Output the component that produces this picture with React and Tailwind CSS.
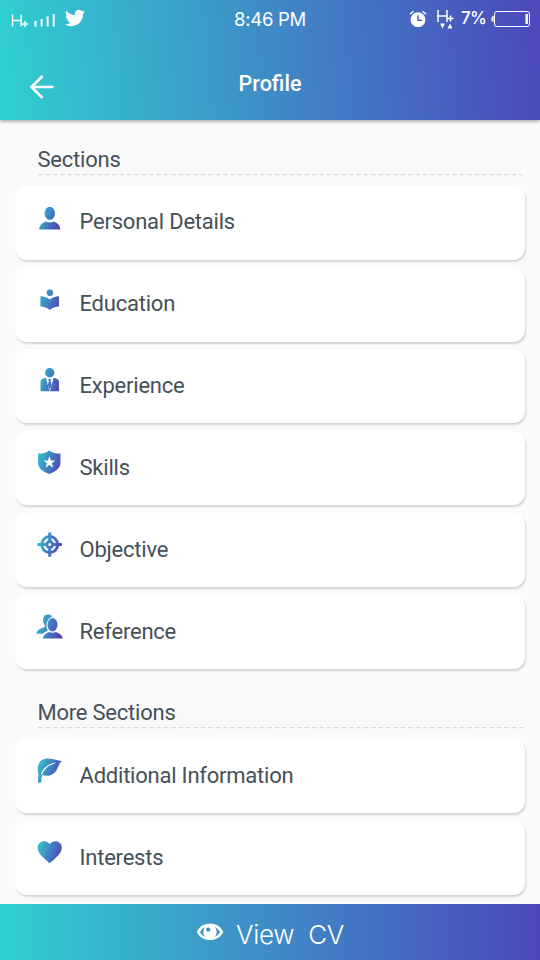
import React from 'react'

function PersonIcon() {
    return (
        <>
            <ellipse cx="13.8" cy="8.3" rx="5.2" ry="6.6" />
            <path d="M3 24.4c.4-4 2.8-6.6 7-8 2.2 1.3 5.400 1.3 7.600 0 4.200 1.400 6.500 4 6.800 8z" />
        </>
    )
}

function EducationIcon() {
    return (
        <>
            <circle cx="13.9" cy="5.8" r="3.2" />
            <path d="M4.400 9.200c3.800.2 7 1.300 9.400 3.400 2.400-2.100 5.600-3.200 9.200-3.400v10.400c-3.400.2-6.700 1.400-9.200 3.400-2.500-2-5.800-3.200-9.400-3.400z" />
        </>
    )
}

function ExperienceIcon() {
    return (
        <>
            <circle cx="13.7" cy="4.8" r="4.7" />
            <path d="M4.500 23.200V14.500c0-2.300 1.300-3.700 4.200-4.400l1.300-.2 3.500 13.300z" />
            <path d="M23 23.200V14.500c0-2.300-1.300-3.700-4.200-4.400l-1.300-.2-3.500 13.300z" />
            <path d="M12.200 11h3.100l-.7 2 1 4-1.900 5-1.900-5 1.100-4z" />
        </>
    )
}

function SkillsIcon() {
    return (
        <path
            fillRule="evenodd"
            d="M13.300.4c3 2.300 6.800 3.300 11.100 3.200v9.200c0 5.200-4.600 9.100-11.100 11.200C6.800 21.900 2 18 2 12.800V3.600C6.400 3.700 10.200 2.700 13.300.4zM13.400 6.200l-1.500 4.300-4.500.1 3.600 2.700-1.300 4.400 3.700-2.600 3.700 2.600-1.300-4.400 3.600-2.700-4.500-.1z"
        />
    )
}

function ObjectiveIcon() {
    return (
        <>
            <g fill="none" stroke="url(#iconFill)">
                <circle cx="13.7" cy="12.6" r="8" strokeWidth="3" />
                <circle cx="13.7" cy="12.6" r="3" strokeWidth="3" />
            </g>
            <path d="M12.200.5h3v8.200h-3zM12.200 16.600h3v8.200h-3zM1.500 11.100h8.300v3H1.500zM17.600 11.100h8.300v3h-8.300z" />
        </>
    )
}

function ReferenceIcon() {
    return (
        <>
            <path d="M16.200 2.200C14.500.2 11.100-.1 9 1.300 6.400 3.100 6.500 8 8.500 10.700c.7 1 .5 2.100-.7 2.800C4 14.700.9 16.400.3 19.700h6.700c1.100-1.300 2.700-2.300 4.800-3-2.300-4.100-2.100-11.100 4.400-14.500z" />
            <ellipse cx="16.500" cy="10.800" rx="5" ry="6.700" />
            <path d="M6.800 24.600c.4-3.500 2.900-5.600 6.500-6.700 1.900 1.100 4.400 1.100 6.300 0 3.900 1.100 6.700 3.200 7.200 6.700z" />
        </>
    )
}

function LeafIcon() {
    return (
        <>
            <path d="M2.700 17.500C.5 10.500 1.800 4.700 6.200 2 10-.3 14 .3 17.500 1.200c3 .8 5.500 1.400 8.200 1.700-2.700 2.900-3.300 5.600-4.800 8.600-2.600 5.300-8.500 7.600-15.200 5.600L4 18z" />
            <path d="M4.800 18.500C6.200 12.500 10 7.500 18.500 5" fill="none" stroke="white" strokeWidth="1.300" />
            <path d="M2 24.700c-.2-5 .4-8.700 2.400-12.500C4.300 14.500 4.600 17 6.300 16.500 5.500 18.500 5.300 21 5.300 23.500c0 .8-.5 1.200-1.200 1.200z" />
        </>
    )
}

function HeartIcon() {
    return (
        <path d="M13.700 23.200C8.500 18.800 1.600 13.700 1.600 7.600 1.600 1.100 10.100-.9 13.700 4.100 17.300-.9 25.800 1.100 25.800 7.600c0 6.100-6.900 11.200-12.100 15.600z" />
    )
}

const sections = [
    { label: 'Personal Details', Icon: PersonIcon },
    { label: 'Education', Icon: EducationIcon },
    { label: 'Experience', Icon: ExperienceIcon },
    { label: 'Skills', Icon: SkillsIcon },
    { label: 'Objective', Icon: ObjectiveIcon },
    { label: 'Reference', Icon: ReferenceIcon },
]

const moreSections = [
    { label: 'Additional Information', Icon: LeafIcon },
    { label: 'Interests', Icon: HeartIcon },
]

function StatusBar() {
    return (
        <div className="grid h-[38px] grid-cols-3 items-center">
            <div className="flex items-center pl-[11px]">
                <svg width="46" height="18" viewBox="0 0 46 18" fill="none" stroke="white">
                    <path d="M1.500 4.500v12M10.200 4.500v12M1.500 10.500h8.700" strokeWidth="1.400" />
                    <path d="M11 14h6M14 11v6" strokeWidth="1.400" />
                    <path d="M24.500 11v5.500M30.600 9v7.500M36.600 6.500v10M42.700 4v12.500" strokeWidth="2" />
                </svg>
                <svg className="-mt-[2px] ml-2 h-5 w-5" viewBox="0 0 24 24" fill="white">
                    <path d="M23.950 4.570a10 10 0 0 1-2.820.77 4.960 4.960 0 0 0 2.160-2.720c-.95.550-2 .950-3.130 1.180a4.920 4.920 0 0 0-8.380 4.480C7.690 8.100 4.070 6.130 1.640 3.160a4.920 4.920 0 0 0 1.520 6.570 4.900 4.900 0 0 1-2.230-.61v.06a4.920 4.920 0 0 0 3.950 4.830 5 5 0 0 1-2.210.08 4.940 4.940 0 0 0 4.600 3.420A9.870 9.870 0 0 1 0 19.540a13.990 13.990 0 0 0 7.550 2.210c9.050 0 14-7.500 14-13.980 0-.210 0-.420-.02-.630a9.940 9.940 0 0 0 2.420-2.570z" />
                </svg>
            </div>
            <div className="text-center font-['Inter',sans-serif] text-[18.500px] leading-none tracking-[-0.3px]">8:46 PM</div>
            <div className="flex items-center justify-end pr-[9px]">
                <svg width="18" height="18" viewBox="0 0 18 18">
                    <circle cx="9" cy="9.700" r="7.400" fill="white" />
                    <path d="M1 4.300 4.500 1.200M17 4.300l-3.500-3.100" stroke="white" strokeWidth="1.500" />
                    <path d="M9 5.200v5h4" fill="none" stroke="#446abf" strokeWidth="1.500" />
                </svg>
                <svg className="ml-[9px]" width="19" height="20" viewBox="0 0 19 20" fill="none" stroke="white">
                    <path d="M2 1v12M11 1v12M2 7h9" strokeWidth="1.500" />
                    <path d="M11.500 9.500h6M14.500 6.500v6" strokeWidth="1.600" />
                    <path d="M4 14.500h5L6.500 19.500zM11.500 19.500h5L14 14.500z" fill="white" stroke="none" />
                </svg>
                <span className="ml-[6px] mt-[-1px] font-['Inter',sans-serif] text-[17px] font-medium leading-none tracking-[-0.8px]">7%</span>
                <svg className="ml-[5px]" width="40" height="18" viewBox="0 0 40 18">
                    <path d="M2.500 6v6H2a2 2 0 0 1-1.500-2V8A2 2 0 0 1 2 6z" fill="white" />
                    <rect x="3.500" y="1.500" width="35" height="15" rx="2.500" fill="none" stroke="white" />
                    <path d="M35.700 4v10" stroke="white" strokeWidth="2.400" />
                </svg>
            </div>
        </div>
    )
}

function SectionTitle({ children }) {
    return (
        <div className="ml-[22.500px] mr-[2.500px]">
            <h2 className="text-[22px] leading-[28px] tracking-[-0.22px]">{children}</h2>
            <svg className="block h-[2px] w-full">
                <path d="M0 .5H485" stroke="#dadadb" strokeWidth="1.300" strokeDasharray="4.700 2.700" />
            </svg>
        </div>
    )
}

function SectionList({ items }) {
    return (
        <div className="flex flex-col gap-[7.900px]">
            {items.map(({ label, Icon }) => (
                <div
                    key={label}
                    className="flex h-[74px] items-start rounded-[12px] bg-white pl-[21px] shadow-[1px_2px_2px_rgba(0,0,0,0.15)]"
                >
                    <svg className="mt-[19px] h-7 w-7 overflow-visible" viewBox="0 0 28 28" fill="url(#iconFill)">
                        <Icon />
                    </svg>
                    <span className="ml-[15.500px] mt-[22.500px] text-[22px] leading-[28px] tracking-[-0.22px]">{label}</span>
                </div>
            ))}
        </div>
    )
}

export default function App() {
    return (
        <div className="flex h-[960px] w-[540px] flex-col overflow-hidden bg-[#fafafb] font-['Roboto',sans-serif] text-[#455059]">
            <svg className="absolute h-0 w-0">
                <defs>
                    <linearGradient id="iconFill" gradientUnits="userSpaceOnUse" x1="1" y1="8" x2="26" y2="17">
                        <stop offset="0" stopColor="#35c3cb" />
                        <stop offset="0.500" stopColor="#417fc2" />
                        <stop offset="1" stopColor="#5540b0" />
                    </linearGradient>
                </defs>
            </svg>

            <header className="h-[120px] shrink-0 bg-[linear-gradient(85deg,#2fd0d0_0%,#3f8bc7_50%,#4c48bb_100%)] text-white shadow-[0_1px_4px_rgba(0,0,0,0.4)]">
                <StatusBar />
                <div className="grid h-[82px] grid-cols-3 items-center">
                    <svg className="ml-[29px] mt-[16px]" width="26" height="26" viewBox="0 0 26 26" fill="none" stroke="white" strokeWidth="2.700">
                        <path d="M13.500 2 2.500 13l11 11M2.500 13H24.500" />
                    </svg>
                    <h1 className="mt-[11px] text-center text-[21.500px] font-medium">Profile</h1>
                </div>
            </header>

            <main className="flex-1 overflow-hidden px-[15px] pt-[26px]">
                <SectionTitle>Sections</SectionTitle>
                <div className="h-[9.700px]" />
                <SectionList items={sections} />
                <div className="h-[29.500px]" />
                <SectionTitle>More Sections</SectionTitle>
                <div className="h-[10.500px]" />
                <SectionList items={moreSections} />
            </main>

            <footer className="flex h-[56px] shrink-0 items-center bg-[linear-gradient(90deg,#2fd0d0_0%,#3f8bc7_50%,#4c48bb_100%)] pl-[196px] text-white">
                <svg className="-mt-[1px]" width="28" height="20" viewBox="0 0 28 20">
                    <path d="M.800 10C5.500-1.300 22.500-1.300 27.200 10 22.500 20.700 5.500 20.700.800 10z" fill="white" />
                    <path d="M4 10.200C5.300 7.800 7 6 9.300 5a6.900 6.900 0 0 0 0 9.800C7 14 5.300 12.500 4 10.200zM24 10.200c-1.300-2.400-3-4.200-5.300-5.200a6.900 6.900 0 0 1 0 9.800c2.300-.8 4-2.300 5.300-4.600z" fill="#3f8fc8" />
                    <circle cx="12.200" cy="7.600" r="2.100" fill="#3f8fc8" />
                </svg>
                <span className="ml-[12px] mt-[5px] whitespace-pre font-['Inter',sans-serif] text-[26px] font-light leading-none tracking-[-0.3px]">View  CV</span>
            </footer>
        </div>
    )
}
